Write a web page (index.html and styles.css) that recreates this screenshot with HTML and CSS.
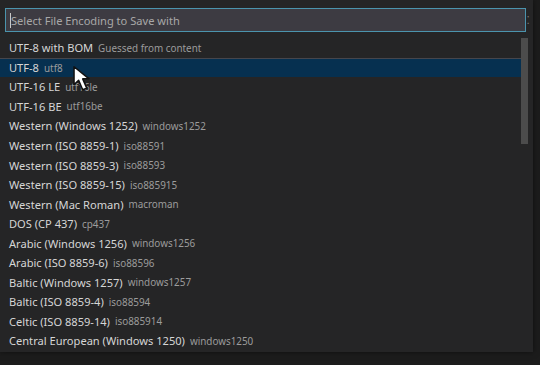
FILE: index.html
```html
<!DOCTYPE html>
<html>
<head>
<meta charset="utf-8">
<link rel="stylesheet" href="styles.css">
</head>
<body>
<div class="widget">
  <div class="input-row">
    <div class="input"><span class="caret"></span><span class="placeholder">Select File Encoding to Save with</span></div>
    <div class="grip">⁚</div>
  </div>
  <div class="list">
    <div class="row"><span class="label">UTF-8 with BOM</span><span class="desc">Guessed from content</span></div>
    <div class="row selected sep"><span class="label">UTF-8</span><span class="desc">utf8</span></div>
    <div class="row"><span class="label">UTF-16 LE</span><span class="desc">utf16le</span></div>
    <div class="row"><span class="label">UTF-16 BE</span><span class="desc">utf16be</span></div>
    <div class="row"><span class="label">Western (Windows 1252)</span><span class="desc">windows1252</span></div>
    <div class="row"><span class="label">Western (ISO 8859-1)</span><span class="desc">iso88591</span></div>
    <div class="row"><span class="label">Western (ISO 8859-3)</span><span class="desc">iso88593</span></div>
    <div class="row"><span class="label">Western (ISO 8859-15)</span><span class="desc">iso885915</span></div>
    <div class="row"><span class="label">Western (Mac Roman)</span><span class="desc">macroman</span></div>
    <div class="row"><span class="label">DOS (CP 437)</span><span class="desc">cp437</span></div>
    <div class="row"><span class="label">Arabic (Windows 1256)</span><span class="desc">windows1256</span></div>
    <div class="row"><span class="label">Arabic (ISO 8859-6)</span><span class="desc">iso88596</span></div>
    <div class="row"><span class="label">Baltic (Windows 1257)</span><span class="desc">windows1257</span></div>
    <div class="row"><span class="label">Baltic (ISO 8859-4)</span><span class="desc">iso88594</span></div>
    <div class="row"><span class="label">Celtic (ISO 8859-14)</span><span class="desc">iso885914</span></div>
    <div class="row"><span class="label">Central European (Windows 1250)</span><span class="desc">windows1250</span></div>
    <div class="scrollbar"></div>
    <svg class="cursor" width="26" height="30" viewBox="0 0 22 26">
      <path d="M1.5 1.5 L1.5 17 L5.5 13.2 L9 21.5 L12.5 20 L9 12 L14.5 12 Z" fill="#ffffff" stroke="#111" stroke-width="1.3" stroke-linejoin="round"/>
    </svg>
  </div>
</div>
</body>
</html>
```

FILE: styles.css
```css
html, body {
  margin: 0;
  padding: 0;
  background: #1c1c1c;
  width: 540px;
  height: 365px;
  overflow: hidden;
}

.widget {
  width: 533px;
  height: 352px;
  background: #252526;
  box-sizing: border-box;
  padding-top: 8px;
  font-family: "Noto Sans", "Open Sans", sans-serif;
  box-shadow: 0 0 6px rgba(0,0,0,0.5);
}

.input-row {
  display: flex;
  align-items: center;
  padding-left: 5px;
}

.input {
  width: 521px;
  height: 24px;
  box-sizing: border-box;
  border: 1px solid #4b94ad;
  background: #3d3b42;
  display: flex;
  align-items: center;
  padding-left: 4px;
}

.caret {
  width: 1px;
  height: 15px;
  background: #c8c8c8;
}

.placeholder {
  color: #a8a8a8;
  font-size: 11.1px;
}

.grip {
  color: #8a8a8a;
  font-size: 10px;
  margin-left: 1px;
}

.list {
  position: relative;
  margin-top: 6px;
  width: 528px;
}

.row {
  height: 19.55px;
  display: flex;
  align-items: center;
  padding-left: 9px;
  box-sizing: border-box;
  white-space: nowrap;
}

.row.sep {
  border-top: 1px solid #46464c;
}

.row.selected {
  background: #063050;
}

.label {
  color: #d6d6d6;
  font-size: 11.1px;
}

.desc {
  color: #9c9c9c;
  font-size: 9.9px;
  margin-left: 5px;
}

.scrollbar {
  position: absolute;
  right: 0;
  top: 0;
  width: 7px;
  height: 106px;
  background: #4c4c4c;
}

.cursor {
  position: absolute;
  left: 72px;
  top: 27px;
}
```
